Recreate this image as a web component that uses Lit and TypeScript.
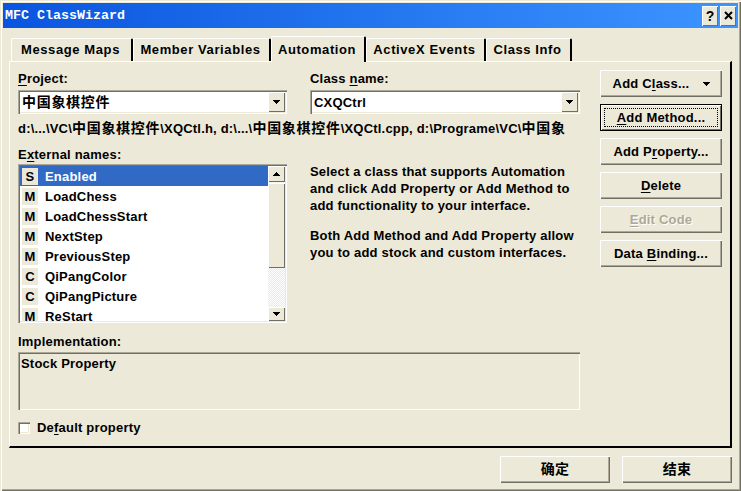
import { LitElement, html, css } from 'lit';
import { customElement } from 'lit/decorators.js';

const NAMES = [
  ['S', 'Enabled'],
  ['M', 'LoadChess'],
  ['M', 'LoadChessStart'],
  ['M', 'NextStep'],
  ['M', 'PreviousStep'],
  ['C', 'QiPangColor'],
  ['C', 'QiPangPicture'],
  ['M', 'ReStart'],
];

const TABS = [
  ['Message Maps', 122],
  ['Member Variables', 138],
  ['Automation', 95],
  ['ActiveX Events', 120],
  ['Class Info', 86],
] as const;

const arrow = (up = false) => html`<svg class="tri" width="7" height="4" viewBox="0 0 7 4">
  <path d=${up ? 'M3 0h1v1h1v1h1v1h1v1H0V3h1V2h1V1h1z' : 'M0 0h7v1H6v1H5v1H4v1H3V3H2V2H1V1H0z'} fill="#000"></path>
</svg>`;

@customElement('app-root')
export class AppRoot extends LitElement {
  static styles = css`
    :host {
      display: block;
      width: 741px;
      height: 491px;
      overflow: hidden;
      font: 700 13px/17px "Liberation Sans", "Noto Sans CJK SC", sans-serif;
      letter-spacing: 0.2px;
      color: #000;
    }
    .tri { display: block; }
    .cjk { font-size: 14px; letter-spacing: 0.7px; }
    .window {
      box-sizing: border-box;
      height: 491px;
      background: #ece9d8;
      padding: 3px;
      box-shadow: inset 1px 1px #ece9d8, inset 2px 2px #fff, inset -1px -1px #716f64, inset -2px -2px #aca899;
      display: flex;
      flex-direction: column;
    }
    .title {
      height: 25px;
      flex: none;
      background: linear-gradient(90deg, #0a55df, #3d95ff);
      display: flex;
      align-items: center;
      padding: 0 2px;
      color: #fff;
      font: 700 13.33px "Liberation Mono", monospace;
      letter-spacing: 0;
    }
    .title span { flex: 1; }
    .caption {
      width: 16px;
      height: 20px;
      margin-left: 2px;
      background: #ece9d8;
      color: #000;
      font: 700 14px/20px "Liberation Sans", sans-serif;
      text-align: center;
      box-shadow: inset 1px 1px #fff, inset -1px -1px #716f64;
      display: flex;
      align-items: center;
      justify-content: center;
    }
    .tabs {
      display: flex;
      height: 25px;
      margin: 8px 0 0 8px;
      flex: none;
      align-items: flex-end;
      position: relative;
      z-index: 1;
      letter-spacing: 0.6px;
    }
    .tab {
      height: 23px;
      box-sizing: border-box;
      padding: 2px 2px 0 0;
      text-align: center;
      border-top: 1px solid #fff;
      border-left: 1px solid #fff;
      border-right: 2px solid #000;
      border-radius: 2px 2px 0 0;
    }
    .tab.active {
      height: 26px;
      margin-bottom: -1px;
      padding-top: 4px;
      background: #ece9d8;
    }
    .panel {
      box-sizing: border-box;
      margin-left: 6px;
      width: 723px;
      height: 387px;
      flex: none;
      padding: 8px 8px 0 8px;
      border-top: 1px solid #fff;
      border-left: 1px solid #fff;
      border-right: 2px solid #000;
      border-bottom: 2px solid #000;
      display: grid;
      grid-template-columns: 562px 122px;
      column-gap: 20px;
    }
    u { text-underline-offset: 2px; }
    .top-row {
      display: grid;
      grid-template-columns: 269px 270px;
      column-gap: 23px;
    }
    .sunken {
      box-shadow: inset 1px 1px #aca899, inset 2px 2px #716f64, inset -1px -1px #fff, inset -2px -2px #ece9d8;
    }
    .combo {
      box-sizing: border-box;
      height: 24px;
      margin-top: 3px;
      background: #fff;
      padding: 2px;
      display: flex;
      line-height: 21px;
    }
    .combo-text { flex: 1; padding-left: 2px; }
    .arrow-btn {
      width: 17px;
      background: #ece9d8;
      box-shadow: inset 1px 1px #fff, inset -1px -1px #716f64;
      display: flex;
      align-items: center;
      justify-content: center;
    }
    .path { margin-top: 6px; white-space: nowrap; overflow: hidden; width: 562px; }
    .mid-row {
      display: grid;
      grid-template-columns: 269px 270px;
      column-gap: 23px;
      margin-top: 9px;
    }
    .list {
      box-sizing: border-box;
      height: 159px;
      margin-top: 1px;
      background: #fff;
      padding: 2px;
      display: flex;
      overflow: hidden;
    }
    .rows { flex: 1; overflow: hidden; }
    .row { height: 20px; display: flex; align-items: center; line-height: 20px; }
    .row.selected { background: #316ac5; color: #fff; }
    .row-name { padding-top: 1px; }
    .kind {
      width: 16px;
      height: 17px;
      margin: 0 7px 0 2px;
      background: #ece9d8;
      color: #000;
      text-align: center;
      font-size: 13px;
      line-height: 17px;
      flex: none;
    }
    .scroll {
      width: 17px;
      display: flex;
      flex-direction: column;
      background: repeating-conic-gradient(#ece9d8 0 25%, #fff 0 50%) 0 0 / 2px 2px;
    }
    .scroll .arrow-btn { width: auto; height: 16px; flex: none; }
    .thumb {
      height: 85px;
      margin-top: 1px;
      flex: none;
      background: #ece9d8;
      box-shadow: inset 1px 1px #fff, inset -1px -1px #716f64;
    }
    .scroll .down { margin-top: auto; height: 14px; }
    .info { margin-top: 17px; }
    .info p { margin: 0 0 13px; }
    .impl-label { margin-top: 10px; }
    .impl {
      box-sizing: border-box;
      height: 58px;
      margin-top: 2px;
      padding: 3px;
      line-height: 17px;
    }
    .check { display: flex; align-items: center; margin-top: 9px; gap: 7px; }
    .box { width: 12px; height: 12px; background: #fff; }
    .buttons { display: flex; flex-direction: column; gap: 7px; }
    .btn {
      box-sizing: border-box;
      height: 27px;
      width: 122px;
      background: #ece9d8;
      line-height: 27px;
      text-align: center;
      box-shadow: inset 1px 1px #fff, inset -1px -1px #716f64, inset -2px -2px #aca899;
      position: relative;
    }
    .btn.with-menu { padding-right: 20px; }
    .btn .menu-arrow { position: absolute; right: 12px; top: 12px; }
    .btn.default {
      box-shadow: inset 0 0 0 1px #000, inset 2px 2px #fff, inset -2px -2px #716f64;
    }
    .btn.default::after {
      content: "";
      position: absolute;
      inset: 4px;
      border: 1px dotted #000;
    }
    .btn.disabled { color: #aca899; text-shadow: 1px 1px #fff; }
    .footer { display: flex; justify-content: flex-end; gap: 12px; padding: 8px 6px 0 0; }
    .footer .btn { width: 110px; font-size: 14px; }
  `;

  render() {
    return html`
      <div class="window">
        <div class="title">
          <span>MFC ClassWizard</span>
          <div class="caption">?</div>
          <div class="caption">
            <svg width="9" height="9" viewBox="0 0 9 9"><path d="M1 1l7 7M8 1l-7 7" stroke="#000" stroke-width="2"></path></svg>
          </div>
        </div>
        <div class="tabs">
          ${TABS.map(
            ([t, w], i) => html`<div class="tab ${i === 2 ? 'active' : ''}" style="width:${w}px">${t}</div>`
          )}
        </div>
        <div class="panel">
          <div class="left">
            <div class="top-row">
              <div>
                <div><u>P</u>roject:</div>
                <div class="combo sunken">
                  <div class="combo-text cjk">中国象棋控件</div>
                  <div class="arrow-btn">${arrow()}</div>
                </div>
              </div>
              <div>
                <div>Class <u>n</u>ame:</div>
                <div class="combo sunken">
                  <div class="combo-text">CXQCtrl</div>
                  <div class="arrow-btn">${arrow()}</div>
                </div>
              </div>
            </div>
            <div class="path">d:\\...\\VC\\<span class="cjk">中国象棋控件</span>\\XQCtl.h, d:\\...\\<span class="cjk">中国象棋控件</span>\\XQCtl.cpp, d:\\Programe\\VC\\<span class="cjk">中国象</span></div>
            <div class="mid-row">
              <div>
                <div>E<u>x</u>ternal names:</div>
                <div class="list sunken">
                  <div class="rows">
                    ${NAMES.map(
                      ([k, n], i) => html`<div class="row ${i === 0 ? 'selected' : ''}">
                        <div class="kind">${k}</div>
                        <div class="row-name">${n}</div>
                      </div>`
                    )}
                  </div>
                  <div class="scroll">
                    <div class="arrow-btn">${arrow(true)}</div>
                    <div class="thumb"></div>
                    <div class="arrow-btn down">${arrow()}</div>
                  </div>
                </div>
              </div>
              <div class="info">
                <p>Select a class that supports Automation<br />and click Add Property or Add Method to<br />add functionality to your interface.</p>
                <p>Both Add Method and Add Property allow<br />you to add stock and custom interfaces.</p>
              </div>
            </div>
            <div class="impl-label">Implementation:</div>
            <div class="impl sunken">Stock Property</div>
            <div class="check">
              <div class="box sunken"></div>
              <div>De<u>f</u>ault property</div>
            </div>
          </div>
          <div class="buttons">
            <div class="btn with-menu">Add C<u>l</u>ass...<span class="menu-arrow">${arrow()}</span></div>
            <div class="btn default"><u>A</u>dd Method...</div>
            <div class="btn">Add P<u>r</u>operty...</div>
            <div class="btn"><u>D</u>elete</div>
            <div class="btn disabled"><u>E</u>dit Code</div>
            <div class="btn">Data <u>B</u>inding...</div>
          </div>
        </div>
        <div class="footer">
          <div class="btn">确定</div>
          <div class="btn">结束</div>
        </div>
      </div>
    `;
  }
}
